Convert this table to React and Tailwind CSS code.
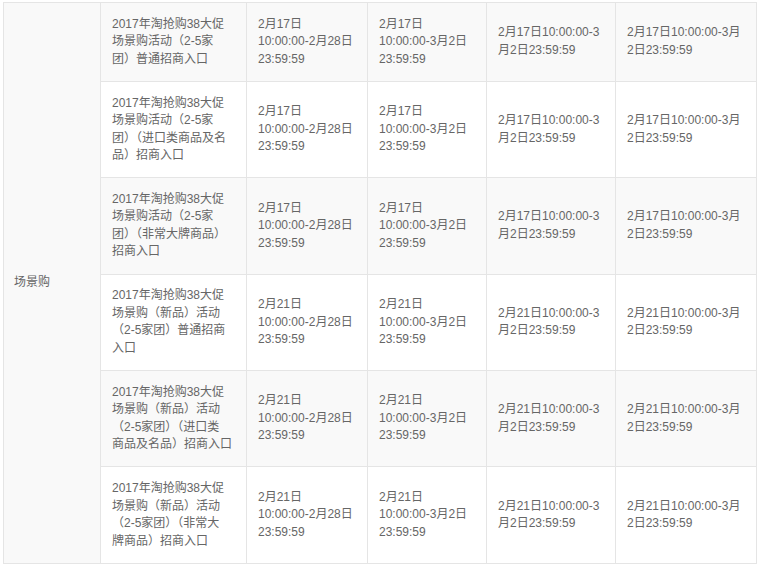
import React from 'react';

const rows = [
    {
        name: ['2017年淘抢购38大促', '场景购活动（2-5家', '团）普通招商入口'],
        day: '17',
    },
    {
        name: ['2017年淘抢购38大促', '场景购活动（2-5家', '团）（进口类商品及名', '品）招商入口'],
        day: '17',
    },
    {
        name: ['2017年淘抢购38大促', '场景购活动（2-5家', '团）（非常大牌商品）', '招商入口'],
        day: '17',
    },
    {
        name: ['2017年淘抢购38大促', '场景购（新品）活动', '（2-5家团）普通招商', '入口'],
        day: '21',
    },
    {
        name: ['2017年淘抢购38大促', '场景购（新品）活动', '（2-5家团）（进口类', '商品及名品）招商入口'],
        day: '21',
    },
    {
        name: ['2017年淘抢购38大促', '场景购（新品）活动', '（2-5家团）（非常大', '牌商品）招商入口'],
        day: '21',
    },
];

const Lines = ({ lines }) => (
    <>
        {lines.map((l, i) => (
            <span key={i} className="block whitespace-nowrap">{l}</span>
        ))}
    </>
);

const cell = 'border border-[#e5e5e5] px-[11px] py-[12.7px] align-middle';

const App = () => {
    return (
        <div
            className="pl-[3px] pt-[2px] bg-white min-h-screen text-[12px] leading-[17.5px] text-[#666]"
            style={{ fontFamily: '"Liberation Sans", "Noto Sans CJK SC", sans-serif' }}
        >
            <table className="border-collapse table-fixed w-[753px]">
                <colgroup>
                    <col className="w-[97px]" />
                    <col className="w-[146px]" />
                    <col className="w-[121px]" />
                    <col className="w-[119px]" />
                    <col className="w-[129px]" />
                    <col className="w-[141px]" />
                </colgroup>
                <tbody>
                    {rows.map((r, i) => (
                        <tr key={i} className={i % 2 === 0 ? 'bg-[#f9f9f9]' : 'bg-white'}>
                            {i === 0 && (
                                <td rowSpan={6} className="border border-[#e5e5e5] pl-[10px] pr-2 align-middle bg-[#f9f9f9]">
                                    场景购
                                </td>
                            )}
                            <td className={cell}>
                                <Lines lines={r.name} />
                            </td>
                            <td className={cell}>
                                <Lines lines={[`2月${r.day}日`, '10:00:00-2月28日', '23:59:59']} />
                            </td>
                            <td className={cell}>
                                <Lines lines={[`2月${r.day}日`, '10:00:00-3月2日', '23:59:59']} />
                            </td>
                            <td className={cell}>
                                <Lines lines={[`2月${r.day}日10:00:00-3`, '月2日23:59:59']} />
                            </td>
                            <td className={cell}>
                                <Lines lines={[`2月${r.day}日10:00:00-3月`, '2日23:59:59']} />
                            </td>
                        </tr>
                    ))}
                </tbody>
            </table>
        </div>
    );
};

export default App;
